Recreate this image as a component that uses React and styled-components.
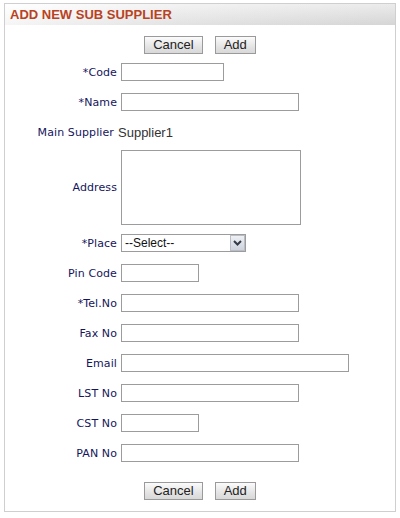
import React from "react";
import styled, { createGlobalStyle } from "styled-components";

const Global = createGlobalStyle`
  html, body { margin: 0; padding: 0; background: #fff; }
  body { font-family: "DejaVu Sans", Verdana, sans-serif; }
`;

const Page = styled.div`
  padding: 3px 4px 0 4px;
  width: 392px;
`;

const Panel = styled.div`
  border: 1px solid #cfcfcf;
  height: 509px;
  box-sizing: border-box;
  display: flex;
  flex-direction: column;
`;

const Header = styled.div`
  height: 21px;
  display: flex;
  align-items: center;
  padding-left: 5px;
  background: linear-gradient(to bottom, rgba(255,255,255,0.4), rgba(0,0,0,0.04)),
    linear-gradient(to right, #ffffff 0%, #ebebeb 45%, #dedede 100%);
`;

const Title = styled.h1`
  margin: 0;
  font-family: "Liberation Sans", Arial, sans-serif;
  font-size: 13px;
  font-weight: bold;
  color: #b9421f;
`;

const ButtonBar = styled.div`
  display: flex;
  justify-content: center;
  gap: 12px;
  padding: ${(p) => p.$pad};
`;

const Button = styled.button`
  height: 18px;
  padding: 0 8px;
  font-family: "Liberation Sans", Arial, sans-serif;
  font-size: 13px;
  color: #222;
  border: 1px solid #9a9a9a;
  background: linear-gradient(to bottom, #fbfbfb, #e4e4e4 60%, #d8d8d8);
  line-height: 16px;
  cursor: pointer;
`;

const Form = styled.div`
  display: grid;
  grid-template-columns: 112px 1fr;
  column-gap: 4px;
`;

const Label = styled.label`
  display: flex;
  align-items: center;
  justify-content: flex-end;
  height: ${(p) => p.$h || 30}px;
  padding-right: ${(p) => p.$pr || 0}px;
  font-size: 11px;
  letter-spacing: 0.1px;
  color: #15155c;
  white-space: nowrap;
`;

const Cell = styled.div`
  display: flex;
  align-items: ${(p) => (p.$top ? "flex-start" : "center")};
  padding-top: ${(p) => (p.$top ? 3 : 0)}px;
  box-sizing: border-box;
  height: ${(p) => p.$h || 30}px;
`;

const Input = styled.input`
  box-sizing: border-box;
  width: ${(p) => p.$w}px;
  height: 18px;
  border: 1px solid #9c9c9c;
  padding: 0 2px;
  font-family: "Liberation Sans", Arial, sans-serif;
  font-size: 12px;
  outline: none;
`;

const TextArea = styled.textarea`
  box-sizing: border-box;
  width: 180px;
  height: 75px;
  border: 1px solid #9c9c9c;
  resize: none;
  margin: 0;
  outline: none;
`;

const Value = styled.span`
  font-family: "Liberation Sans", Arial, sans-serif;
  font-size: 13px;
  color: #333;
  margin-left: -3px;
`;

const SelectBox = styled.div`
  position: relative;
  box-sizing: border-box;
  width: 125px;
  height: 18px;
  border: 1px solid #9c9c9c;
  background: #fff;
  display: flex;
  align-items: center;
  padding-left: 3px;
  font-family: "Liberation Sans", Arial, sans-serif;
  font-size: 12px;
  color: #111;
`;

const Arrow = styled.span`
  position: absolute;
  right: 0;
  top: 0;
  width: 15px;
  height: 16px;
  box-sizing: border-box;
  border: 1px solid #b9bdc8;
  background: linear-gradient(to bottom, #eef0f4, #cdd2dc);
  display: flex;
  align-items: center;
  justify-content: center;
`;

const fields = [
  { label: "*Code", w: 103 },
  { label: "*Name", w: 178 },
];
const fields2 = [
  { label: "Pin Code", w: 78 },
  { label: "*Tel.No", w: 178 },
  { label: "Fax No", w: 178 },
  { label: "Email", w: 228 },
  { label: "LST No", w: 178 },
  { label: "CST No", w: 78 },
  { label: "PAN No", w: 178 },
];

export default function App() {
  return (
    <>
      <Global />
      <Page>
        <Panel>
          <Header>
            <Title>ADD NEW SUB SUPPLIER</Title>
          </Header>
          <ButtonBar $pad="11px 0 3px">
            <Button>Cancel</Button>
            <Button>Add</Button>
          </ButtonBar>
          <Form>
            {fields.map((f) => (
              <React.Fragment key={f.label}>
                <Label>{f.label}</Label>
                <Cell>
                  <Input $w={f.w} />
                </Cell>
              </React.Fragment>
            ))}
            <Label $pr={3}>Main Supplier</Label>
            <Cell>
              <Value>Supplier1</Value>
            </Cell>
            <Label $h={81}>Address</Label>
            <Cell $h={81} $top>
              <TextArea />
            </Cell>
            <Label>*Place</Label>
            <Cell>
              <SelectBox>
                --Select--
                <Arrow>
                  <svg width="9" height="6" viewBox="0 0 9 6">
                    <path d="M1 1 L4.5 4.5 L8 1" fill="none" stroke="#333a48" strokeWidth="2" />
                  </svg>
                </Arrow>
              </SelectBox>
            </Cell>
            {fields2.map((f) => (
              <React.Fragment key={f.label}>
                <Label>{f.label}</Label>
                <Cell>
                  <Input $w={f.w} />
                </Cell>
              </React.Fragment>
            ))}
          </Form>
          <ButtonBar $pad="14px 0 0">
            <Button>Cancel</Button>
            <Button>Add</Button>
          </ButtonBar>
        </Panel>
      </Page>
    </>
  );
}
